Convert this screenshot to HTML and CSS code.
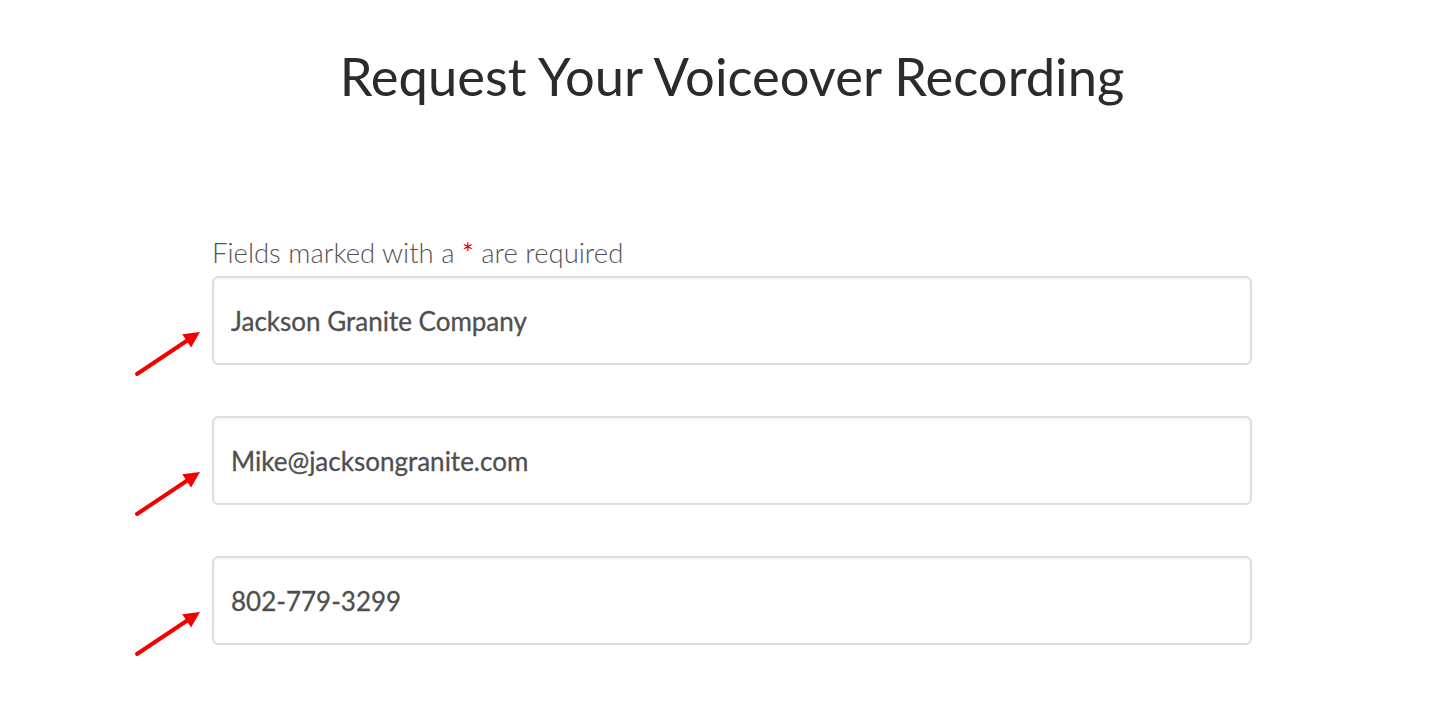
FILE: index.html
```html
<!DOCTYPE html>
<html lang="en">
<head>
<meta charset="utf-8">
<title>Request Your Voiceover Recording</title>
<link rel="stylesheet" href="styles.css">
</head>
<body>
<main class="page">
  <h1 class="title">Request Your Voiceover Recording</h1>
  <form class="form">
    <p class="note">Fields marked with a <span class="req">*</span> are required</p>
    <div class="field">
      <svg class="arrow" width="80" height="60" viewBox="0 0 80 60" aria-hidden="true"><line x1="5" y1="50" x2="56" y2="16" stroke="#f50000" stroke-width="4" stroke-linecap="round"/><polygon points="68,8 59.1,23.6 50.3,10.2" fill="#f50000"/></svg>
      <input class="input" type="text" value="Jackson Granite Company">
    </div>
    <div class="field">
      <svg class="arrow" width="80" height="60" viewBox="0 0 80 60" aria-hidden="true"><line x1="5" y1="50" x2="56" y2="16" stroke="#f50000" stroke-width="4" stroke-linecap="round"/><polygon points="68,8 59.1,23.6 50.3,10.2" fill="#f50000"/></svg>
      <input class="input" type="text" value="Mike@jacksongranite.com">
    </div>
    <div class="field">
      <svg class="arrow" width="80" height="60" viewBox="0 0 80 60" aria-hidden="true"><line x1="5" y1="50" x2="56" y2="16" stroke="#f50000" stroke-width="4" stroke-linecap="round"/><polygon points="68,8 59.1,23.6 50.3,10.2" fill="#f50000"/></svg>
      <input class="input" type="text" value="802-779-3299">
    </div>
  </form>
</main>
</body>
</html>
```

FILE: styles.css
```css
html, body {
  margin: 0;
  padding: 0;
  background: #fff;
}
body {
  font-family: Lato, "Open Sans", sans-serif;
  color: #333;
}
.page {
  width: 1040px;
  margin-left: 212px;
  padding-top: 40px;
  padding-bottom: 80px;
}
.title {
  margin: 0;
  text-align: center;
  font-family: Lato, sans-serif;
  font-weight: 400;
  font-size: 52.5px;
  line-height: 72px;
  color: #2b2b2b;
}
.form {
  margin-top: 123px;
  display: flex;
  flex-direction: column;
  gap: 51px;
}
.note {
  margin: 0 0 -51px 0;
  font-weight: 300;
  font-size: 27.5px;
  line-height: 36px;
  color: #555;
  padding-bottom: 5px;
}
.req {
  color: #e00;
  font-weight: 400;
}
.field {
  position: relative;
}
.arrow {
  position: absolute;
  left: -80px;
  top: 48px;
}
.input {
  display: block;
  box-sizing: border-box;
  width: 1040px;
  height: 89px;
  margin: 0;
  padding: 0 17px;
  border: 2px solid #dedede;
  border-radius: 6px;
  box-shadow: inset 0 1px 3px rgba(0,0,0,0.06);
  background: #fff;
  font-family: Lato, sans-serif;
  font-size: 26px;
  font-weight: 400;
  color: #4f4f4f;
  -webkit-text-stroke: 0.3px #4f4f4f;
  outline: none;
}
```
